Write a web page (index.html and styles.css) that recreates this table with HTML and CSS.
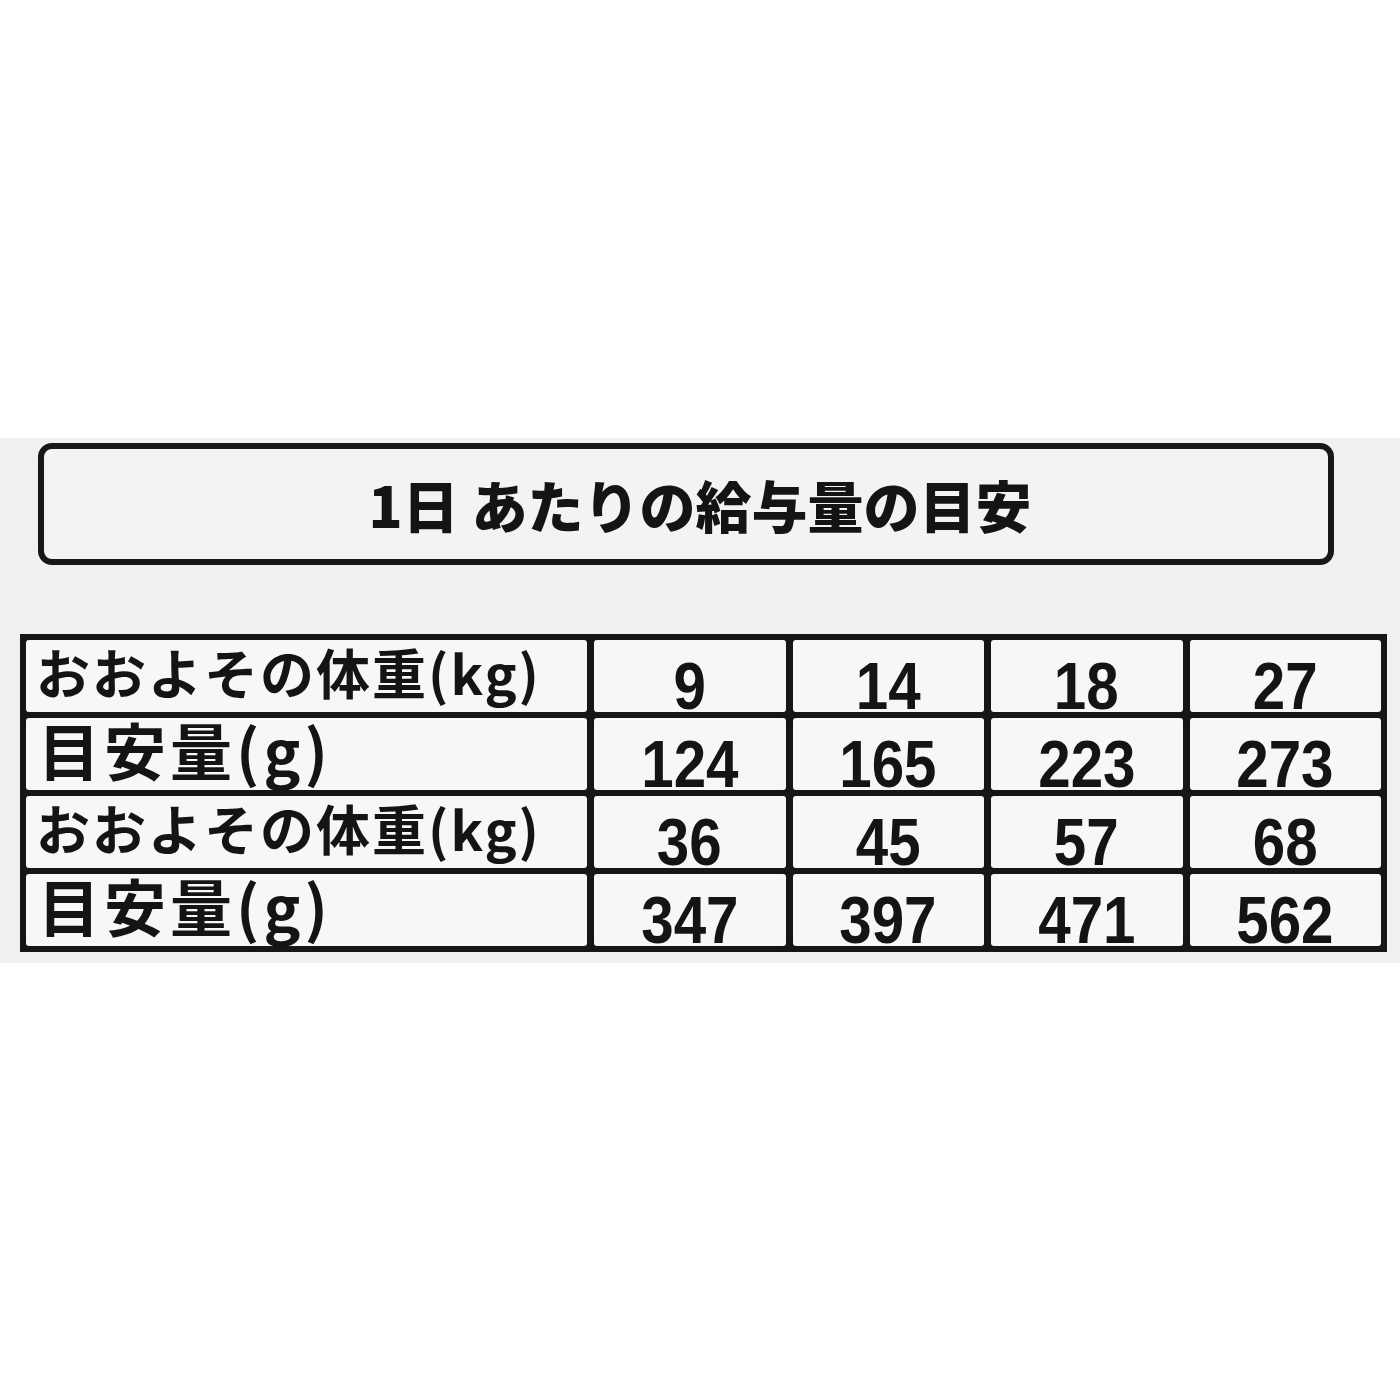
FILE: index.html
```html
<!DOCTYPE html>
<html lang="ja">
<head>
<meta charset="utf-8">
<title>1日あたりの給与量の目安</title>
<link rel="stylesheet" href="styles.css">
</head>
<body>
<div class="page">
  <section class="band">
    <div class="title-box">
      <h1 class="title">1日 あたりの給与量の目安</h1>
    </div>
    <div class="table">
      <div class="cell label label-kg">おおよその体重(kg)</div>
      <div class="cell num"><span>9</span></div>
      <div class="cell num"><span>14</span></div>
      <div class="cell num"><span>18</span></div>
      <div class="cell num"><span>27</span></div>

      <div class="cell label label-g">目安量(g)</div>
      <div class="cell num"><span>124</span></div>
      <div class="cell num"><span>165</span></div>
      <div class="cell num"><span>223</span></div>
      <div class="cell num"><span>273</span></div>

      <div class="cell label label-kg">おおよその体重(kg)</div>
      <div class="cell num"><span>36</span></div>
      <div class="cell num"><span>45</span></div>
      <div class="cell num"><span>57</span></div>
      <div class="cell num"><span>68</span></div>

      <div class="cell label label-g">目安量(g)</div>
      <div class="cell num"><span>347</span></div>
      <div class="cell num"><span>397</span></div>
      <div class="cell num"><span>471</span></div>
      <div class="cell num"><span>562</span></div>
    </div>
  </section>
</div>
</body>
</html>
```
FILE: styles.css
```css
html, body {
  margin: 0;
  padding: 0;
  background: #ffffff;
}

.page {
  width: 1400px;
  height: 1400px;
  padding-top: 438px;
  box-sizing: border-box;
  background: #ffffff;
}

.band {
  background: #eff0f2;
  height: 525px;
  padding-top: 5px;
  box-sizing: border-box;
  display: flex;
  flex-direction: column;
}

.title-box {
  margin: 0 66px 0 38px;
  height: 122px;
  box-sizing: border-box;
  border: 6px solid #181616;
  border-radius: 14px;
  background: #f2f3f5;
  display: flex;
  align-items: center;
  justify-content: center;
  padding-left: 28px;
}

.title {
  margin: 0;
  font-family: "Noto Sans CJK JP", "Noto Sans", sans-serif;
  font-weight: 900;
  font-size: 56px;
  line-height: 1;
  color: #141414;
  white-space: nowrap;
}

.table {
  margin: 69px 13px 0 20px;
  height: 318px;
  box-sizing: border-box;
  padding: 6px;
  background: #161616;
  display: grid;
  grid-template-columns: 561px repeat(4, 1fr);
  grid-template-rows: repeat(4, 72px);
  column-gap: 7px;
  row-gap: 6px;
}

.cell {
  background: #f6f7f9;
  border-radius: 3px;
  color: #141414;
  min-width: 0;
}

.label {
  font-family: "Noto Sans CJK JP", "Noto Sans", sans-serif;
  font-weight: 700;
  white-space: nowrap;
  display: flex;
  align-items: center;
}

.label-kg {
  font-size: 54px;
  letter-spacing: 2px;
  padding-left: 10px;
  line-height: 60px;
  padding-bottom: 9px;
}

.label-g {
  font-size: 62px;
  letter-spacing: 4px;
  padding-left: 12px;
  line-height: 66px;
  padding-bottom: 11px;
}

.num {
  text-align: center;
  font-family: "Liberation Sans", Arial, sans-serif;
  font-weight: 700;
  font-size: 67px;
  line-height: 48px;
  padding-top: 22px;
  height: 72px;
  box-sizing: border-box;
}

.num span {
  display: inline-block;
  transform: scaleX(0.87);
}
```
